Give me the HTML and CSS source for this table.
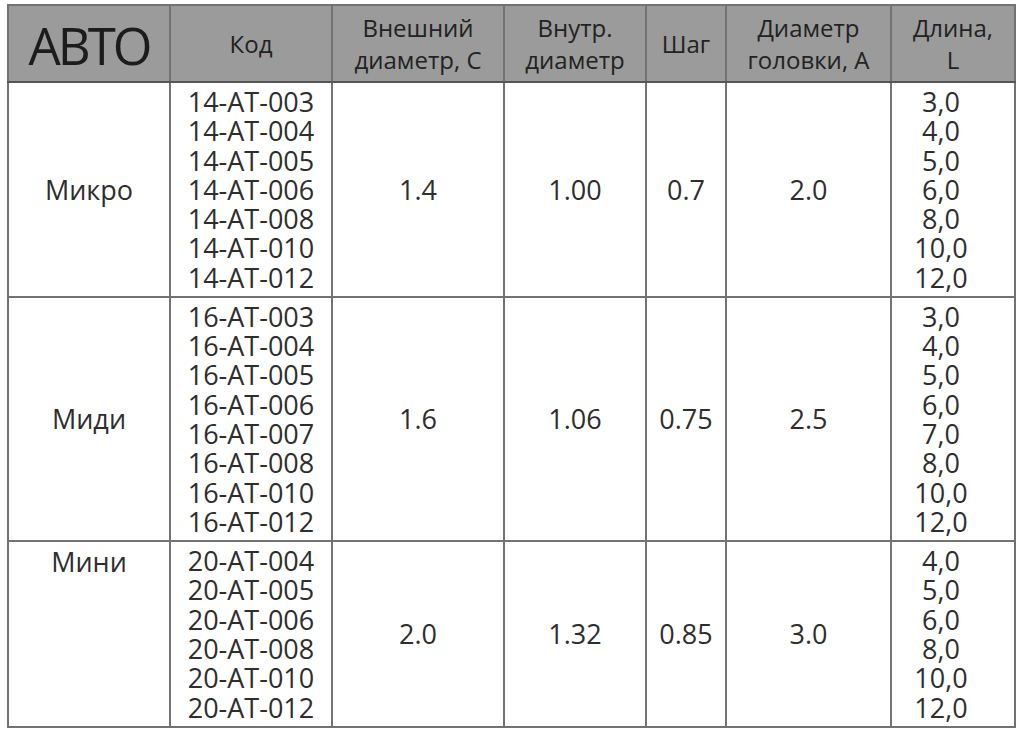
FILE: index.html
```html
<!DOCTYPE html>
<html lang="ru">
<head>
<meta charset="utf-8">
<title>АВТО</title>
<link rel="stylesheet" href="styles.css">
</head>
<body>
<div class="page">
<table class="spec">
  <colgroup>
    <col class="c-type"><col class="c-code"><col class="c-outer"><col class="c-inner"><col class="c-step"><col class="c-head"><col class="c-len">
  </colgroup>
  <thead>
    <tr class="hdr">
      <th class="brand">АВТО</th>
      <th>Код</th>
      <th>Внешний<br>диаметр, С</th>
      <th>Внутр.<br>диаметр</th>
      <th>Шаг</th>
      <th>Диаметр<br>головки, А</th>
      <th>Длина,<br>L</th>
    </tr>
  </thead>
  <tbody>
    <tr class="grp g7">
      <td>Микро</td>
      <td>14-AT-003<br>14-AT-004<br>14-AT-005<br>14-AT-006<br>14-AT-008<br>14-AT-010<br>14-AT-012</td>
      <td>1.4</td>
      <td>1.00</td>
      <td>0.7</td>
      <td>2.0</td>
      <td class="len">3,0<br>4,0<br>5,0<br>6,0<br>8,0<br>10,0<br>12,0</td>
    </tr>
    <tr class="grp g8">
      <td>Миди</td>
      <td>16-AT-003<br>16-AT-004<br>16-AT-005<br>16-AT-006<br>16-AT-007<br>16-AT-008<br>16-AT-010<br>16-AT-012</td>
      <td>1.6</td>
      <td>1.06</td>
      <td>0.75</td>
      <td>2.5</td>
      <td class="len">3,0<br>4,0<br>5,0<br>6,0<br>7,0<br>8,0<br>10,0<br>12,0</td>
    </tr>
    <tr class="grp g6">
      <td class="top">Мини</td>
      <td>20-AT-004<br>20-AT-005<br>20-AT-006<br>20-AT-008<br>20-AT-010<br>20-AT-012</td>
      <td>2.0</td>
      <td>1.32</td>
      <td>0.85</td>
      <td>3.0</td>
      <td class="len">4,0<br>5,0<br>6,0<br>8,0<br>10,0<br>12,0</td>
    </tr>
  </tbody>
</table>
</div>
</body>
</html>
```

FILE: styles.css
```css
html, body {
  margin: 0;
  padding: 0;
  background: #ffffff;
}
.page {
  padding: 4px 0 0 7px;
}
.spec {
  border-collapse: collapse;
  table-layout: fixed;
  width: 1007px;
  border: 2px solid #555555;
  font-family: "Open Sans", "Noto Sans", sans-serif;
  font-stretch: 90%;
  color: #2e2e2e;
}
.c-type { width: 162px; }
.c-code { width: 162px; }
.c-outer { width: 172px; }
.c-inner { width: 142px; }
.c-step { width: 80px; }
.c-head { width: 165px; }
.c-len { width: 124px; }

.spec th, .spec td {
  border: 2px solid #737373;
  text-align: center;
  padding: 0;
}
.hdr {
  height: 77px;
  background: #9b9b9b;
}
.hdr th {
  font-weight: 400;
  font-size: 24px;
  line-height: 32px;
  color: #222222;
  vertical-align: middle;
}
.hdr th.brand {
  font-size: 51px;
  line-height: 60px;
  font-stretch: 90%;
  letter-spacing: -3px;
  font-kerning: none;
  color: #1c1c1c;
  padding: 2px 0 0 0;
}
.spec thead th {
  border-bottom-color: #555555;
}
.grp td {
  font-size: 27px;
  line-height: 29.3px;
  padding: 0;
  vertical-align: middle;
}
.g7 { height: 215px; }
.g8 { height: 244px; }
.g6 { height: 186px; }
.grp td.len {
  padding-right: 24px;
}
.grp td.top {
  vertical-align: top;
  padding-top: 5px;
}
```
